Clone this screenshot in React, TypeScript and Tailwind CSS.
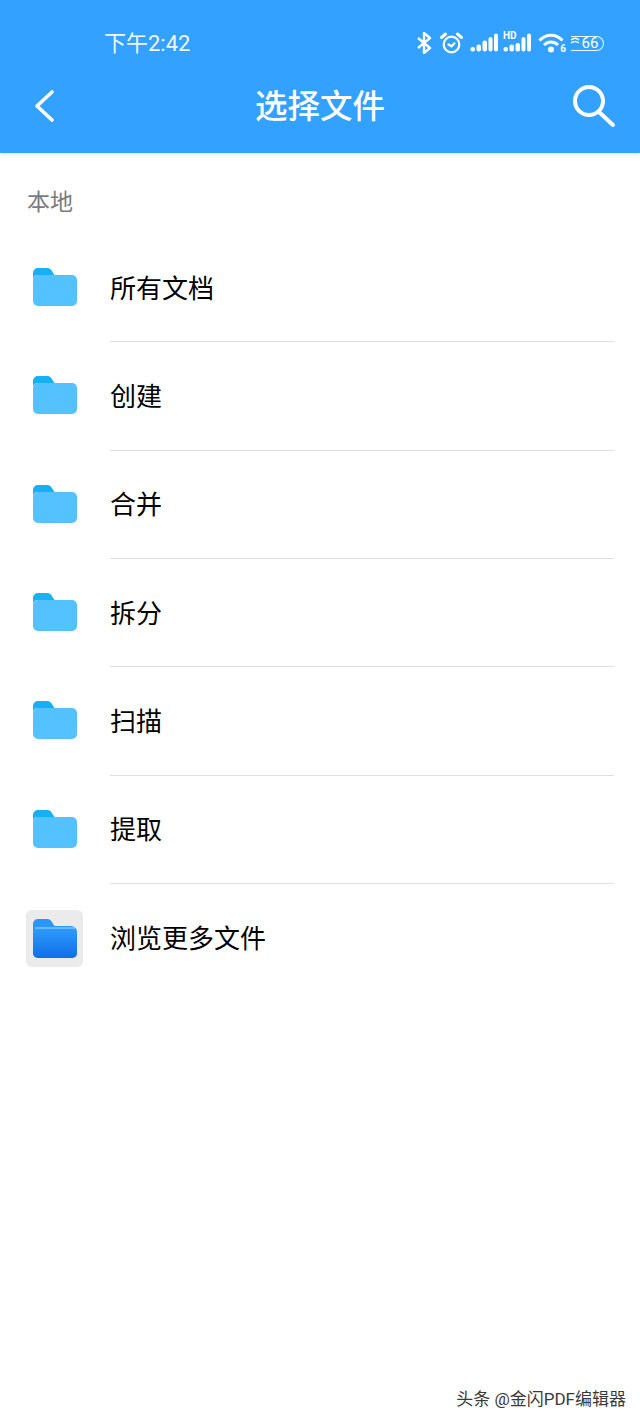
const FONT = "font-['Roboto','Noto_Sans_CJK_SC',sans-serif]"

const folders = ["所有文档", "创建", "合并", "拆分", "扫描", "提取"]

const SignalBars = ({ hd }: { hd?: boolean }) => (
  <svg width="28" height="20" viewBox="0 0 28 20" fill="white">
    <rect x="0.500" y="14" width="4.500" height="4.500" rx="2" />
    <rect x="6.500" y="11.500" width="4.500" height="7" rx="2" />
    <rect x="12.500" y={hd ? 10 : 7.500} width="4.500" height={hd ? 8.500 : 11} rx="2" />
    <rect x="18.500" y="4" width="4" height="14.500" rx="2" />
    <rect x="24" y="0.500" width="4" height="18" rx="2" />
  </svg>
)

const StatusIcons = () => (
  <div className="flex items-center">
    <svg width="16" height="22" viewBox="0 0 16 22" fill="none" stroke="white" strokeWidth="2.400" className="mr-[8px]">
      <path d="M2 6l12 10-6 5V1l6 5L2 16" strokeLinejoin="round" />
    </svg>
    <svg width="23" height="22" viewBox="0 0 23 22" fill="none" stroke="white" strokeWidth="2.200" className="mr-[7px]" strokeLinecap="round">
      <circle cx="11.500" cy="12.500" r="7.800" />
      <path d="M8.500 12.500l3 1.800 3-3" />
      <path d="M1.500 5.500L5.500 2M21.500 5.500L17.500 2" strokeWidth="3" />
    </svg>
    <div className="mr-[5px]">
      <SignalBars />
    </div>
    <div className="relative mr-[7px]">
      <SignalBars hd />
      <span className="absolute left-0 -top-[2px] text-[10px] leading-[10px] font-bold text-white">HD</span>
    </div>
    <div className="relative mr-[5px] h-[22px] w-[28px]">
      <svg width="28" height="22" viewBox="0 0 28 22" fill="none" stroke="white" strokeWidth="3">
        <path d="M1.500 8.500C8 1.500 18 1.500 24.500 8.500" />
        <path d="M6 13c4-4 10-4 14 0" />
        <circle cx="13" cy="17.500" r="3" fill="white" stroke="none" />
      </svg>
      <span className="absolute right-0 bottom-0 text-[10px] leading-[10px] font-bold text-white">6</span>
    </div>
    <div className="relative flex h-[15px] w-[33px] items-center justify-center rounded-r-full border-y border-r border-white/90">
      <span className="pl-[6px] text-[15px] leading-none text-white">66</span>
      <svg width="10" height="10" viewBox="0 0 10 10" fill="none" stroke="white" strokeWidth="1.300" className="absolute -left-px -top-px">
        <path d="M1 4q4-3.500 8 0M1 7q4-3 8 0" />
      </svg>
    </div>
  </div>
)

const FolderLight = () => (
  <svg width="44" height="38" viewBox="0 0 44 38" className="mb-[2px]">
    <path d="M0 5a5 5 0 0 1 5-5h9c3 0 4 1.500 5.500 4l2 3H5a5 5 0 0 0-5 4z" fill="#16b0f5" />
    <rect x="0" y="7" width="44" height="31" rx="5" fill="#54c2ff" />
  </svg>
)

const FolderBlue = () => (
  <svg width="44" height="39" viewBox="0 0 44 39">
    <defs>
      <linearGradient id="fb" x1="0" y1="0" x2="0" y2="1">
        <stop offset="0" stopColor="#2f9bff" />
        <stop offset="1" stopColor="#0f6fe6" />
      </linearGradient>
    </defs>
    <path d="M0 5a5 5 0 0 1 5-5h9c3 0 4 1.500 5.500 4l2 3H38a6 6 0 0 1 6 6v21a5 5 0 0 1-5 5H5a5 5 0 0 1-5-5z" fill="#2a96fb" />
    <rect x="0" y="9" width="44" height="30" rx="5" fill="url(#fb)" />
    <path d="M2 9h40" stroke="#a9dcff" strokeWidth="1" />
  </svg>
)

export default function App() {
  return (
    <div className={`flex min-h-[1422px] flex-col bg-white ${FONT}`}>
      <header className="bg-[#33a1ff] h-[153px] shadow-[0_1px_3px_rgba(0,0,0,0.12)]">
        <div className="flex h-[86px] items-center justify-between pl-[104px] pr-[36px]">
          <span className="text-[22px] text-white/95">下午2:42</span>
          <StatusIcons />
        </div>
        <div className="flex h-[40px] items-center justify-between pl-[34px] pr-[24px]">
          <div className="w-[44px] -mr-[10px]">
            <svg width="22" height="34" viewBox="0 0 22 34" fill="none" stroke="white" strokeWidth="3.600" strokeLinecap="round" strokeLinejoin="round">
              <path d="M18 3L3 17l15 14" />
            </svg>
          </div>
          <h1 className="pt-[2px] text-[32.500px] font-medium text-white">选择文件</h1>
          <svg width="44" height="44" viewBox="0 0 44 44" fill="none" stroke="white" strokeWidth="4" strokeLinecap="round">
            <circle cx="17" cy="17" r="14" />
            <path d="M27 28l14 13" />
          </svg>
        </div>
      </header>

      <div className="flex h-[81px] items-start pl-[27px] pt-[33px]">
        <span className="text-[23px] leading-[33px] text-[#7b7b7b]">本地</span>
      </div>

      <ul>
        {folders.map((name) => (
          <li key={name} className="flex h-[108.33px] items-center pl-[33px]">
            <FolderLight />
            <div className="ml-[33px] mr-[26px] flex h-full flex-1 items-center border-b border-[#dfdfdf]">
              <span className="pt-[3px] text-[26px] text-black">{name}</span>
            </div>
          </li>
        ))}
        <li className="flex h-[108px] items-center pl-[26px]">
          <div className="mt-[2px] flex h-[57px] w-[57px] items-center justify-center rounded-md bg-[#ebebeb]">
            <FolderBlue />
          </div>
          <span className="ml-[27px] pt-[3px] text-[26px] text-black">浏览更多文件</span>
        </li>
      </ul>

      <div className="mt-auto flex justify-end pb-[10px] pr-[14px]">
        <span className="text-[17px] leading-[26px] text-[#3a3a3a] [text-shadow:0_0_2px_white]">头条 @金闪PDF编辑器</span>
      </div>
    </div>
  )
}
